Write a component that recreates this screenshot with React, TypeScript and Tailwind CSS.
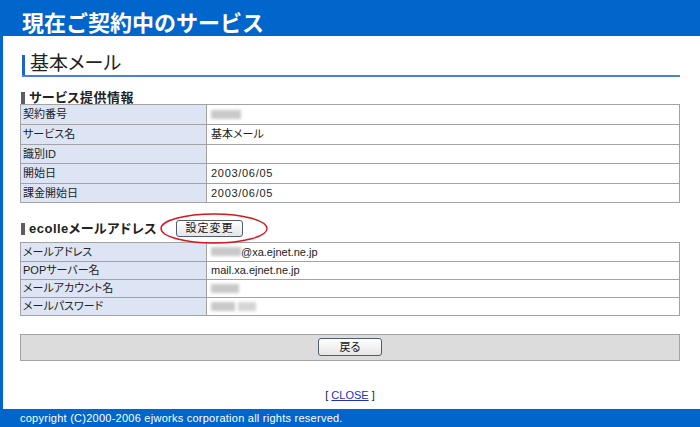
import React from 'react';

const jp = "font-['Liberation_Sans','Noto_Sans_CJK_JP',sans-serif]";

type Row = { label: string; value: React.ReactNode };

function Blur({ w, className = '' }: { w: number; className?: string }) {
  return (
    <span
      className={`inline-block h-[9px] bg-[#c9c9c9] blur-[1.5px] align-middle ${className}`}
      style={{ width: w }}
    />
  );
}

function InfoTable({ rows, rowH }: { rows: Row[]; rowH: string }) {
  return (
    <div className="border border-[#a3a3a3] bg-white">
      {rows.map((r, i) => (
        <div key={r.label} className={`flex ${rowH} ${i > 0 ? 'border-t border-[#a3a3a3]' : ''}`}>
          <div className="w-[186px] shrink-0 bg-[#dde4f4] border-r border-[#a3a3a3] pl-[2px] flex items-center">
            {r.label}
          </div>
          <div className="flex-1 pl-[4px] flex items-center">{r.value}</div>
        </div>
      ))}
    </div>
  );
}

function SectionTitle({ children }: { children: React.ReactNode }) {
  return (
    <div className="flex items-center gap-[4px] ml-[1px]">
      <span className="w-[4px] h-[12px] bg-[#5e5e5e]" />
      <span className="text-[13px] font-bold text-[#222] tracking-[0.5px] leading-[13px]">{children}</span>
    </div>
  );
}

export default function App() {
  const serviceRows: Row[] = [
    { label: '契約番号', value: <Blur w={30} /> },
    { label: 'サービス名', value: '基本メール' },
    { label: '識別ID', value: '' },
    { label: '開始日', value: <span className="tracking-[0.7px]">2003/06/05</span> },
    { label: '課金開始日', value: <span className="tracking-[0.7px]">2003/06/05</span> },
  ];

  const mailRows: Row[] = [
    {
      label: 'メールアドレス',
      value: (
        <span className="flex items-center">
          <Blur w={30} />
          <span>@xa.ejnet.ne.jp</span>
        </span>
      ),
    },
    { label: 'POPサーバー名', value: 'mail.xa.ejnet.ne.jp' },
    { label: 'メールアカウント名', value: <Blur w={28} /> },
    {
      label: 'メールパスワード',
      value: (
        <span className="flex items-center gap-[3px]">
          <Blur w={24} />
          <Blur w={18} className="bg-[#d6d6d6]" />
        </span>
      ),
    },
  ];

  return (
    <div className={`w-[700px] h-[427px] flex flex-col bg-white text-[11px] text-[#222] ${jp} [font-feature-settings:'palt']`}>
      <header className="h-[36px] shrink-0 bg-[#0066cc] flex items-center pl-[22px] pt-[5px]">
        <h1 className="text-white text-[22px] font-bold leading-none font-['Noto_Sans_CJK_JP',sans-serif] [font-feature-settings:normal]">
          現在ご契約中のサービス
        </h1>
      </header>

      <main className="flex-1 flex flex-col border-l-[3px] border-[#0066cc] pl-[17px] pr-[20px]">
        <div className="mt-[19px] ml-[2px] flex items-end h-[22px] border-b-2 border-[#4a80d4]">
          <span className="w-[3px] h-[20px] bg-[#1a66cc] mr-[5px]" />
          <h2 className="text-[19px] leading-[20px] font-normal text-[#222] pb-[1px]">
            基本メール
          </h2>
        </div>

        <div className="mt-[14px] mb-[0px]">
          <SectionTitle>サービス提供情報</SectionTitle>
        </div>
        <InfoTable rows={serviceRows} rowH="h-[19.4px]" />

        <div className="mt-[17px] mb-[4px] flex items-center h-[18px]">
          <SectionTitle>ecolleメールアドレス</SectionTitle>
          <div className="relative ml-[19px]">
            <svg className="absolute left-[-16px] top-[-7px] w-[108px] h-[31px] overflow-visible" viewBox="0 0 108 31">
              <ellipse cx="54" cy="15.5" rx="53" ry="14.5" fill="none" stroke="#d8141c" strokeWidth="1.4" />
            </svg>
            <button className="relative w-[67px] h-[17px] rounded-[3px] border border-[#4e5d73] bg-gradient-to-b from-white to-[#e6e6e6] text-[11px] leading-none tracking-[1px] text-[#111]">
              設定変更
            </button>
          </div>
        </div>
        <InfoTable rows={mailRows} rowH="h-[18px]" />

        <div className="mt-[18px] h-[27px] border border-[#a3a3a3] bg-[#dcdcdc] flex items-center justify-center">
          <button className="w-[64px] h-[18px] rounded-[3px] border border-[#4e5d73] bg-gradient-to-b from-white to-[#e6e6e6] text-[11px] leading-none text-[#111]">
            戻る
          </button>
        </div>

        <div className="mt-[26px] text-center leading-[16px]">
          [ <a href="#" className="text-[#2233bb] underline">CLOSE</a> ]
        </div>
      </main>

      <footer className="h-[18px] shrink-0 bg-[#0066cc] text-white text-[11px] tracking-[0.25px] flex items-center pl-[20px] pt-[1px]">
        copyright (C)2000-2006 ejworks corporation all rights reserved.
      </footer>
    </div>
  );
}
